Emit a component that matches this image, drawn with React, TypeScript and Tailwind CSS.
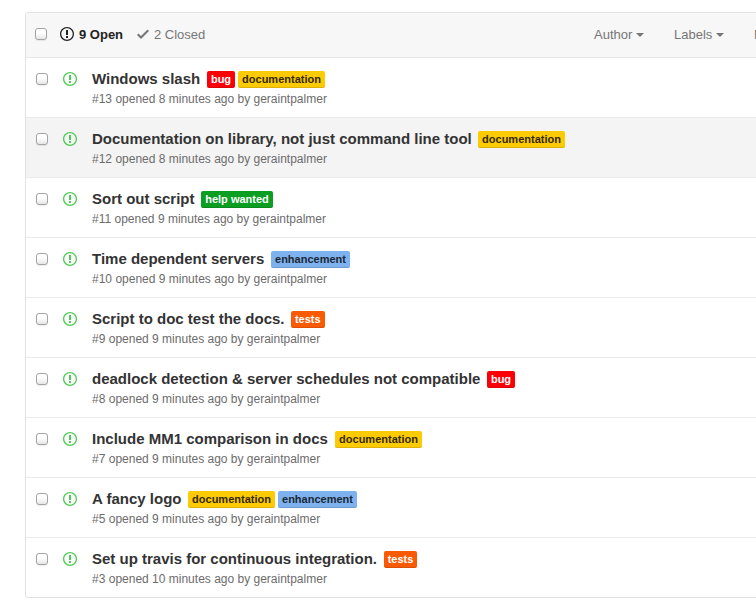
type LabelName = 'bug' | 'documentation' | 'help wanted' | 'enhancement' | 'tests';

const labelStyles: Record<LabelName, string> = {
  bug: 'w-[28px] bg-[#fc0007] text-white',
  documentation: 'w-[87px] bg-[#fdcb04] text-[#332900]',
  'help wanted': 'w-[72px] bg-[#0a9e23] text-white',
  enhancement: 'w-[79px] bg-[#7db2ee] text-[#1c2733]',
  tests: 'w-[33.5px] bg-[#fb5a04] text-white',
};

const issues: { id: number; title: string; titleWidth: string; minutes: number; labels: LabelName[] }[] = [
  { id: 13, title: 'Windows slash', titleWidth: 'w-[115px]', minutes: 8, labels: ['bug', 'documentation'] },
  { id: 12, title: 'Documentation on library, not just command line tool', titleWidth: 'w-[386px]', minutes: 8, labels: ['documentation'] },
  { id: 11, title: 'Sort out script', titleWidth: 'w-[109px]', minutes: 9, labels: ['help wanted'] },
  { id: 10, title: 'Time dependent servers', titleWidth: 'w-[179px]', minutes: 9, labels: ['enhancement'] },
  { id: 9, title: 'Script to doc test the docs.', titleWidth: 'w-[199px]', minutes: 9, labels: ['tests'] },
  { id: 8, title: 'deadlock detection & server schedules not compatible', titleWidth: 'w-[395px]', minutes: 9, labels: ['bug'] },
  { id: 7, title: 'Include MM1 comparison in docs', titleWidth: 'w-[243px]', minutes: 9, labels: ['documentation'] },
  { id: 5, title: 'A fancy logo', titleWidth: 'w-[96px]', minutes: 9, labels: ['documentation', 'enhancement'] },
  { id: 3, title: 'Set up travis for continuous integration.', titleWidth: 'w-[291.8px]', minutes: 10, labels: ['tests'] },
];

function Checkbox({ className = '' }: { className?: string }) {
  return (
    <span
      role="checkbox"
      aria-checked="false"
      className={`block size-3 shrink-0 rounded-[3px] border border-[#a3a3a3] bg-linear-to-b from-white from-40% to-[#e6e6e6] shadow-[0_1px_1px_rgba(0,0,0,0.08)] ${className}`}
    />
  );
}

function IssueIcon({ className }: { className: string }) {
  return (
    <svg viewBox="0 0 14 16" className={`h-4 w-3.5 shrink-0 fill-current ${className}`}>
      <path d="M7 2.3c3.14 0 5.7 2.56 5.7 5.7s-2.56 5.7-5.7 5.7A5.71 5.71 0 0 1 1.3 8c0-3.14 2.56-5.7 5.7-5.7zM7 1C3.14 1 0 4.14 0 8s3.14 7 7 7 7-3.14 7-7-3.14-7-7-7zm1 3H6v5h2V4zm0 6H6v2h2v-2z" />
    </svg>
  );
}

function Caret() {
  return <span className="ml-1 mt-px border-x-4 border-t-4 border-x-transparent border-t-[#767676]" />;
}

export default function App() {
  return (
    <div className="h-[615px] w-[756px] overflow-hidden bg-white pl-[25px] pt-3 font-['Liberation_Sans',Arial,sans-serif]">
      <div className="w-[980px] rounded-[3px] border border-[#e2e2e2]">
        <div className="flex h-[45px] items-center border-b border-[#e8e8e8] bg-[#f7f7f7] pb-px pl-[9px] text-[13px] text-[#767676]">
          <Checkbox className="mb-px" />
          <IssueIcon className="mb-px ml-[13px] text-[#222]" />
          <span className="ml-[5px] w-[45px] whitespace-nowrap font-bold text-[#222]">9 Open</span>
          <svg viewBox="0 0 12 16" className="mb-px ml-[13px] h-4 w-3 fill-[#767676]">
            <path d="M12 5l-8 8-4-4 1.5-1.5L4 10l6.5-6.5L12 5z" />
          </svg>
          <span className="ml-[5px] w-[52px] whitespace-nowrap">2 Closed</span>
          <div className="ml-[388px] flex w-[50px] items-center">Author<Caret /></div>
          <div className="ml-[30px] flex w-[50px] items-center">Labels<Caret /></div>
          <div className="ml-[30px]">Milestones</div>
        </div>
        {issues.map((issue) => (
          <div
            key={issue.id}
            className={`flex h-[60px] border-b border-[#eaeaea] pl-2.5 last:h-[59px] last:border-b-0 ${issue.id === 12 ? 'bg-[#f4f4f4]' : ''}`}
          >
            <div className="flex h-[42px] items-center">
              <Checkbox />
              <IssueIcon className="ml-[15px] text-[#4fcb53]" />
            </div>
            <div className="ml-[15px] pt-3">
              <div className="flex h-[18px] items-center">
                <span className={`${issue.titleWidth} shrink-0 whitespace-nowrap text-[15px] font-bold text-[#333]`}>{issue.title}</span>
                <div className="flex gap-[3px] pt-px">
                  {issue.labels.map((label) => (
                    <span
                      key={label}
                      className={`${labelStyles[label]} flex h-[17px] items-center justify-center whitespace-nowrap rounded-[2px] text-[11px] font-bold shadow-[inset_0_-1px_0_rgba(0,0,0,0.12)]`}
                    >
                      {label}
                    </span>
                  ))}
                </div>
              </div>
              <p className="mt-[3px] whitespace-nowrap text-[12px] leading-4 text-[#6c6c6c]">
                #{issue.id} opened {issue.minutes} minutes ago by geraintpalmer
              </p>
            </div>
          </div>
        ))}
      </div>
    </div>
  );
}
